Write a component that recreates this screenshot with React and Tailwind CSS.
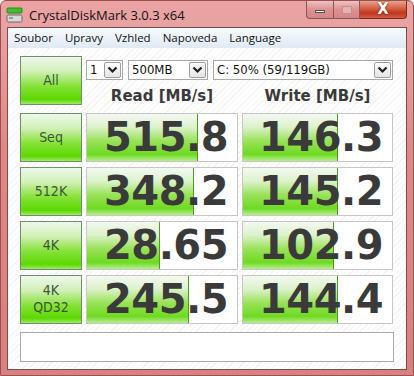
import React from 'react';

const rows = [
  { label: ['Seq'], read: '515.8', readFill: 111, write: '146.3', writeFill: 95 },
  { label: ['512K'], read: '348.2', readFill: 107, write: '145.2', writeFill: 95 },
  { label: ['4K'], read: '28.65', readFill: 73, write: '102.9', writeFill: 91 },
  { label: ['4K', 'QD32'], read: '245.5', readFill: 102, write: '144.4', writeFill: 95 },
];

const menu = ['Soubor', 'Upravy', 'Vzhled', 'Napoveda', 'Language'];

const tahoma = "font-['DejaVu_Sans_Condensed','DejaVu_Sans',sans-serif]";

const GreenButton = ({ lines }) => (
  <div className={`flex h-[49px] w-[62px] flex-col items-center justify-center border border-[#728f6c] bg-[linear-gradient(to_bottom,#eef8ea_0%,#d2f0b8_30%,#86e238_62%,#5cd802_90%,#9fea66_100%)] text-[14px] leading-[17px] text-[#3c5634] ${tahoma}`}>
    {lines.map((l) => (
      <span key={l}>{l}</span>
    ))}
  </div>
);

const ScoreCell = ({ value, fill }) => (
  <div className="relative h-[49px] overflow-hidden border border-[#c6c6c6] bg-white">
    <div
      className="absolute bottom-0 left-0 top-0 border-r border-[#4f9a22] bg-[linear-gradient(to_bottom,#f4f9f1_0%,#dcf2cb_28%,#98e256_58%,#6fda22_86%,#b8ee90_100%)]"
      style={{ width: fill }}
    />
    <div className="relative flex h-full items-center justify-end pr-[9px] font-['DejaVu_Sans',sans-serif] text-[40px] font-bold tracking-[-0.5px] text-[#3a3a3a]">
      {value}
    </div>
  </div>
);

const Chevron = () => (
  <svg width="11" height="8" viewBox="0 0 11 8">
    <path d="M1.5 1.5 L5.5 5.5 L9.5 1.5" fill="none" stroke="#1e1e1e" strokeWidth="2.2" />
  </svg>
);

const Select = ({ value, className }) => (
  <div className={`flex h-[20px] items-center justify-between border border-[#a8a8a8] bg-white pl-[3px] pr-[1px] text-[13px] text-[#111] ${tahoma} ${className}`}>
    <span>{value}</span>
    <div className="flex h-[16px] w-[17px] items-center justify-center rounded-[2px] border border-[#9e9e9e] bg-[linear-gradient(to_bottom,#fdfdfd,#e4e4e4)]">
      <Chevron />
    </div>
  </div>
);

const AppIcon = () => (
  <svg width="17" height="17" viewBox="0 0 17 17">
    <rect x="1" y="1" width="15" height="5" rx="1" fill="#3fbf2a" stroke="#2a8a1c" strokeWidth="1" />
    <rect x="1" y="8" width="15" height="7" rx="1.5" fill="#d9d9d9" stroke="#6b6b6b" strokeWidth="1" />
    <rect x="3" y="10" width="4" height="2" fill="#9a9a9a" />
  </svg>
);

export default function App() {
  return (
    <div className="h-[376px] w-[414px] overflow-hidden rounded-t-[6px] border border-[#9a5050] bg-[linear-gradient(to_bottom,#eaa3a2_0%,#e8a2a1_8%,#de8888_40%,#d98080_100%)]">
      {/* title bar */}
      <div className="flex h-[26px] items-start justify-between">
        <div className="flex items-center gap-[6px] pl-[5px] pt-[5px]">
          <AppIcon />
          <span className="font-['Open_Sans',sans-serif] text-[13px] leading-[18px] text-[#111]">
            CrystalDiskMark 3.0.3 x64
          </span>
        </div>
        <div className="mr-[6px] flex h-[18px]">
          <div className="flex w-[28px] items-center justify-center rounded-bl-[4px] border border-t-0 border-[#8b5656] bg-[linear-gradient(to_bottom,#f0c2c2,#dc9090_50%,#d68686)]">
            <div className="mt-[4px] h-[3px] w-[10px] border border-[#555] bg-white" />
          </div>
          <div className="flex w-[26px] items-center justify-center border-b border-r border-[#8b5656] bg-[linear-gradient(to_bottom,#f0c2c2,#dc9090_50%,#d68686)]">
            <div className="h-[8px] w-[10px] border border-[#c98a8a] bg-[#e8b0b0]" />
          </div>
          <div className="flex w-[47px] items-center justify-center rounded-br-[4px] border-b border-r border-[#7a2a20] bg-[linear-gradient(to_bottom,#e8a58f,#d0553a_50%,#c2341c_70%,#d0603f)] text-[15px] font-bold leading-none text-white [text-shadow:0_0_2px_#3a0a00] font-['DejaVu_Sans',sans-serif]">
            X
          </div>
        </div>
      </div>

      {/* client */}
      <div className="mx-[6px] flex h-[343px] flex-col border border-[#7e4c4c] bg-[repeating-linear-gradient(135deg,#ffffff_0px,#ffffff_3px,#f3f3f3_3px,#f3f3f3_4px)]">
        <div className="flex h-[20px] items-center gap-[12px] bg-[linear-gradient(to_bottom,#f8fbfe,#dfe9f5)] pl-[6px] font-['Open_Sans',sans-serif] text-[11.5px] text-[#111]">
          {menu.map((m) => (
            <span key={m}>{m}</span>
          ))}
        </div>

        <div className="pl-[12px] pt-[8px]">
          <div className="grid grid-cols-[62px_152px_151px] gap-x-[4px] gap-y-[5px]">
            <GreenButton lines={['All']} />
            <div className="col-span-2 flex flex-col">
              <div className="mt-[4px] flex gap-[5px]">
                <Select value="1" className="w-[37px]" />
                <Select value="500MB" className="w-[80px]" />
                <Select value="C: 50% (59/119GB)" className="w-[180px]" />
              </div>
              <div className="mt-[5px] grid grid-cols-[152px_151px] gap-x-[4px] font-['DejaVu_Sans',sans-serif] text-[15px] font-bold text-[#3a3a3a]">
                <div className="text-center">Read [MB/s]</div>
                <div className="text-center">Write [MB/s]</div>
              </div>
            </div>

            {rows.map((r) => (
              <React.Fragment key={r.read}>
                <GreenButton lines={r.label} />
                <ScoreCell value={r.read} fill={r.readFill} />
                <ScoreCell value={r.write} fill={r.writeFill} />
              </React.Fragment>
            ))}
          </div>

          <div className="mt-[8px] h-[30px] w-[374px] border border-[#ababab] bg-white" />
        </div>
      </div>
    </div>
  );
}
